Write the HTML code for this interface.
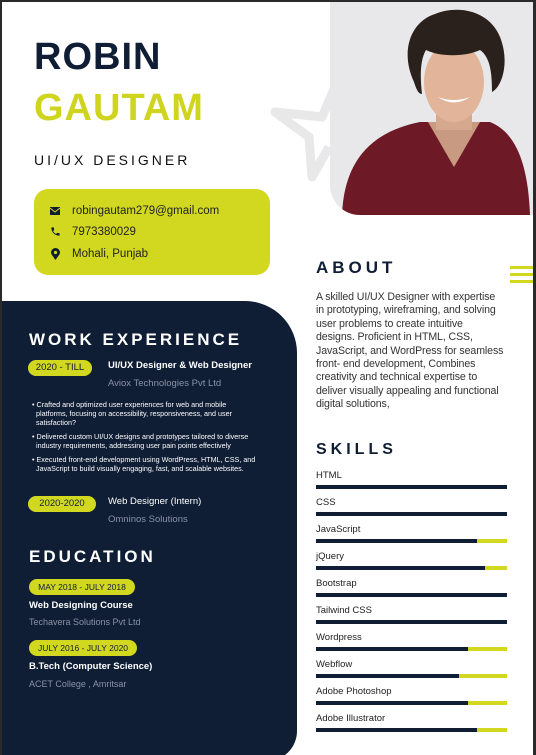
<!DOCTYPE html>
<html><head><meta charset="utf-8"><style>
*{margin:0;padding:0;box-sizing:border-box}
body{width:536px;height:755px;background:#2a2a2a;position:relative;overflow:hidden;font-family:"Liberation Sans",sans-serif}
.pg{position:absolute;left:2px;top:2px;width:531px;height:753px;background:#fff;overflow:hidden}
.a{position:absolute;white-space:nowrap}
.navy{color:#0f1d35}
.lime{background:#d2d820}
.nav{position:absolute;left:-2px;top:299px;width:297px;height:460px;background:#0f1d35;border-top-right-radius:52px;border-bottom-right-radius:30px}
.pill{position:absolute;background:#d2d820;color:#0f1d35;border-radius:10px;font-size:9.5px;text-align:center;line-height:16px;height:16px}
.w{color:#fff}
.g{color:#8a93a6}
.bar{position:absolute;left:314px;width:191px;height:4px;background:#0f1d35}
.bar i{position:absolute;right:0;top:0;height:4px;background:#d2d820}
.sk{position:absolute;left:314px;font-size:9.5px;color:#222}
</style></head><body><div class="pg">
<svg class="a" style="left:265px;top:75px" width="80" height="110" viewBox="0 0 80 110"><path d="M70 5 L55 40 L8 35 L42 60 L45 100 L62 70" fill="none" stroke="#e8e8e8" stroke-width="9" stroke-linejoin="round"/></svg>
<div class="a" style="left:328px;top:0;width:203px;height:213px;background:#e8e8ea;border-bottom-left-radius:30px;overflow:hidden">
<svg width="203" height="213" viewBox="0 0 203 213"><path d="M12 213 C14 160 40 130 90 120 L160 120 C185 130 198 160 200 213Z" fill="#6e1a26"/><path d="M98 120 L124 165 L150 120Z" fill="#c99a82"/><rect x="106" y="92" width="36" height="36" fill="#d6a88e"/><ellipse cx="124" cy="80" rx="30" ry="40" fill="#e2b59a"/><path d="M84 80 C70 50 80 20 105 12 C130 2 160 10 170 35 C180 60 172 85 162 90 C162 70 160 55 150 48 C135 55 110 55 96 48 C90 58 90 75 92 92 C88 92 86 86 84 80Z" fill="#2a201c"/><path d="M108 95 Q124 106 140 95 Q124 101 108 95Z" fill="#fff"/></svg></div>
<div class="a navy" style="left:32px;top:34px;font-size:38px;font-weight:bold;letter-spacing:1px">ROBIN</div>
<div class="a" style="left:32px;top:85px;font-size:38px;font-weight:bold;color:#cfd51e;letter-spacing:1px">GAUTAM</div>
<div class="a" style="left:32px;top:150px;font-size:14px;letter-spacing:3px;color:#111">UI/UX DESIGNER</div>
<div class="a lime" style="left:32px;top:187px;width:236px;height:86px;border-radius:14px"></div>
<svg class="a" style="left:48px;top:205px" width="10" height="8"><rect width="10" height="8" fill="#0f1d35"/><path d="M0 1 L5 5 L10 1" stroke="#d2d820" fill="none"/></svg>
<svg class="a" style="left:48px;top:224px" width="11" height="11" viewBox="0 0 24 24"><path d="M6.6 10.8c1.4 2.8 3.8 5.1 6.6 6.6l2.2-2.2c.3-.3.7-.4 1-.2 1.1.4 2.3.6 3.6.6.6 0 1 .4 1 1V20c0 .6-.4 1-1 1C10.6 21 3 13.4 3 4c0-.6.4-1 1-1h3.5c.6 0 1 .4 1 1 0 1.3.2 2.5.6 3.6.1.3 0 .7-.2 1z" fill="#0f1d35"/></svg>
<svg class="a" style="left:49px;top:246px" width="9" height="12"><path d="M4.5 12 C1 7 0 6 0 4.5 A4.5 4.5 0 0 1 9 4.5 C9 6 8 7 4.5 12Z" fill="#0f1d35"/><circle cx="4.5" cy="4.5" r="1.6" fill="#d2d820"/></svg>
<div class="a" style="left:70px;top:203px;font-size:11.5px;color:#222">robingautam279@gmail.com</div>
<div class="a" style="left:70px;top:224px;font-size:11.5px;color:#222">7973380029</div>
<div class="a" style="left:70px;top:246px;font-size:11.5px;color:#222">Mohali, Punjab</div>
<div class="a navy" style="left:314px;top:256px;font-size:17px;font-weight:bold;letter-spacing:4px">ABOUT</div>
<div class="a lime" style="left:508px;top:264px;width:25px;height:3px"></div>
<div class="a lime" style="left:508px;top:271px;width:25px;height:3px"></div>
<div class="a lime" style="left:508px;top:278px;width:25px;height:3px"></div>
<div class="a" style="left:314px;top:289px;font-size:10.6px;line-height:13.4px;color:#333;letter-spacing:-0.1px">A skilled UI/UX Designer with expertise<br>in prototyping, wireframing, and solving<br>user problems to create intuitive<br>designs. Proficient in HTML, CSS,<br>JavaScript, and WordPress for seamless<br>front- end development, Combines<br>creativity and technical expertise to<br>deliver visually appealing and functional<br>digital solutions,</div>
<div class="a navy" style="left:314px;top:439px;font-size:16px;font-weight:bold;letter-spacing:4px">SKILLS</div>
<div class="sk" style="top:468px">HTML</div><div class="bar" style="top:483px"></div>
<div class="sk" style="top:495px">CSS</div><div class="bar" style="top:510px"></div>
<div class="sk" style="top:522px">JavaScript</div><div class="bar" style="top:537px"><i style="width:30px"></i></div>
<div class="sk" style="top:549px">jQuery</div><div class="bar" style="top:564px"><i style="width:22px"></i></div>
<div class="sk" style="top:576px">Bootstrap</div><div class="bar" style="top:591px"></div>
<div class="sk" style="top:603px">Tailwind CSS</div><div class="bar" style="top:618px"></div>
<div class="sk" style="top:630px">Wordpress</div><div class="bar" style="top:645px"><i style="width:39px"></i></div>
<div class="sk" style="top:657px">Webflow</div><div class="bar" style="top:672px"><i style="width:48px"></i></div>
<div class="sk" style="top:684px">Adobe Photoshop</div><div class="bar" style="top:699px"><i style="width:39px"></i></div>
<div class="sk" style="top:711px">Adobe Illustrator</div><div class="bar" style="top:726px"><i style="width:30px"></i></div>
<div class="nav"></div>
<div class="a w" style="left:27px;top:328px;font-size:17px;font-weight:bold;letter-spacing:3px">WORK EXPERIENCE</div>
<div class="pill" style="left:26px;top:358px;width:64px">2020 - TILL</div>
<div class="a w" style="left:106px;top:358px;font-size:9.5px;font-weight:bold">UI/UX Designer &amp; Web Designer</div>
<div class="a g" style="left:106px;top:376px;font-size:9.5px">Aviox Technologies Pvt Ltd</div>
<div class="a w" style="left:30px;top:398px;font-size:7.2px;line-height:9px">
<div>• Crafted and optimized user experiences for web and mobile<br>&nbsp;&nbsp;platforms, focusing on accessibility, responsiveness, and user<br>&nbsp;&nbsp;satisfaction?</div>
<div style="margin-top:5px">• Delivered custom UI/UX designs and prototypes tailored to diverse<br>&nbsp;&nbsp;industry requirements, addressing user pain points effectively</div>
<div style="margin-top:5px">• Executed front-end development using WordPress, HTML, CSS, and<br>&nbsp;&nbsp;JavaScript to build visually engaging, fast, and scalable websites.</div></div>
<div class="pill" style="left:26px;top:494px;width:68px">2020-2020</div>
<div class="a w" style="left:106px;top:494px;font-size:9.5px">Web Designer (Intern)</div>
<div class="a g" style="left:106px;top:512px;font-size:9.5px">Omninos Solutions</div>
<div class="a w" style="left:27px;top:545px;font-size:17px;font-weight:bold;letter-spacing:3px">EDUCATION</div>
<div class="pill" style="left:27px;top:577px;width:106px;font-size:8.5px">MAY 2018 - JULY 2018</div>
<div class="a w" style="left:27px;top:598px;font-size:9.5px;font-weight:bold">Web Designing Course</div>
<div class="a g" style="left:27px;top:615px;font-size:9px">Techavera Solutions Pvt Ltd</div>
<div class="pill" style="left:27px;top:638px;width:108px;font-size:8.5px">JULY 2016 - JULY 2020</div>
<div class="a w" style="left:27px;top:659px;font-size:9.5px;font-weight:bold">B.Tech (Computer Science)</div>
<div class="a g" style="left:27px;top:677px;font-size:9px">ACET College , Amritsar</div>
</div></body></html>
